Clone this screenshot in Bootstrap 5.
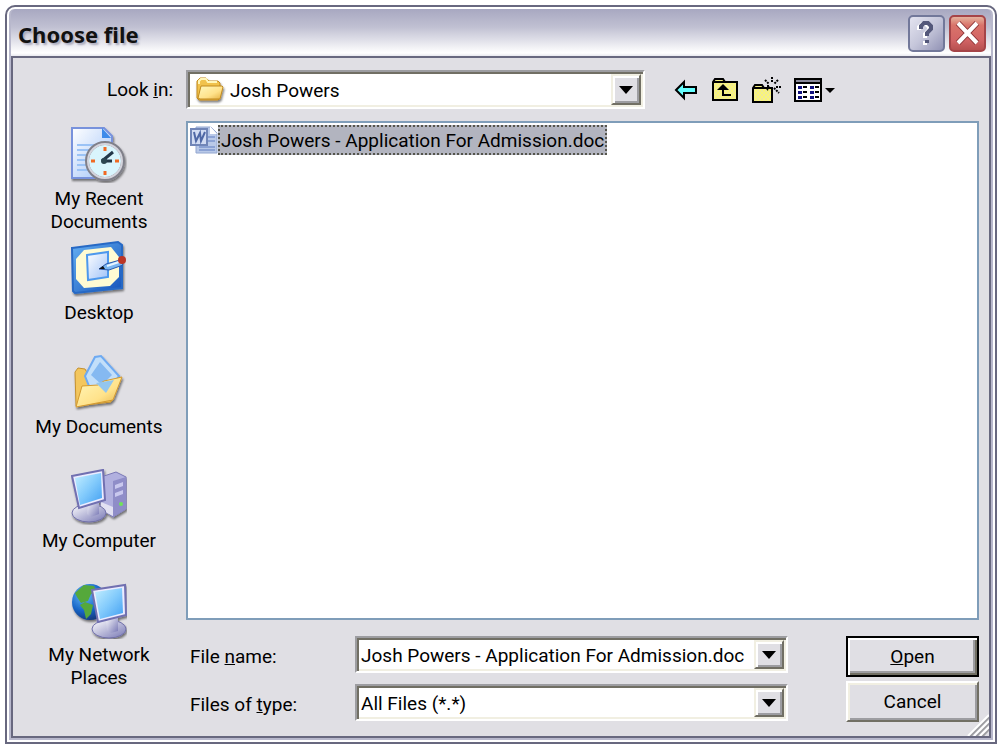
<!DOCTYPE html>
<html lang="en">
<head>
<meta charset="utf-8">
<meta name="viewport" content="width=device-width, initial-scale=1">
<title>Choose file</title>
<link href="https://cdn.jsdelivr.net/npm/bootstrap@5.3.0/dist/css/bootstrap.min.css" rel="stylesheet">
<style>
:root{--face:#e0dfe4;--edge:#68687f;--silver:#b8b8cc;--shade:#9d9da1;--dark:#716f64;--cream:#f1efe2}
body{background:#fff;font-family:Roboto,"Liberation Sans",sans-serif;font-size:19px;line-height:23px;color:#000;padding:5px 7px 2px 5px}
.dialog{background:linear-gradient(#a5a5bf 0,#c0c0d2 20px,#fff 46px,#d3d3df 52px);border:2px solid var(--edge);border-radius:10px 10px 0 0;box-shadow:inset 0 2px #fff,inset 2px 0 #fff,inset -2px 0 #fff,inset 0 -2px #fff,inset 4px 0 var(--silver),inset -4px 0 var(--silver),inset 0 -4px var(--silver)}
.title-bar{height:49px;padding:4px 9px 0 11px}
.title-bar h1{font:bold 22px/26px "Noto Sans","Open Sans",sans-serif;color:#111;text-shadow:2px 2px 2px #aaaabb}
.cap-btn{width:37px;height:37px;padding:0;border:2px solid #72789a;border-radius:5px;background:linear-gradient(135deg,#e4e4f0,#c5c6da 50%,#9293b5)}
.cap-close{border-color:#a54448;background:linear-gradient(#e5b29d 0,#d9736a 25%,#d26465 70%,#b75050)}
.client{margin:0 4px 4px;background:var(--face);border:2px solid var(--edge);padding:12px 10px 14px 12px;position:relative}
.side{width:148px;margin-right:13px}
.places{padding-top:6px}
.side-label{text-align:right}
.place{display:block;min-height:114px;color:#000;text-decoration:none;text-align:center}
.place svg{display:block;margin:0 auto 4px}
.combo{background:#fff;border:2px solid;border-color:var(--shade) #fff #fff var(--shade);box-shadow:inset 2px 2px var(--dark),inset -2px -2px var(--cream);padding:2px}
.combo select,.combo input{appearance:none;border:0;background:none;outline:0;padding:2px 2px 0;min-width:0;color:#000}
.combo.look select{padding-left:4px}
.drop{width:30px;padding:0;border:2px solid;border-color:var(--cream) var(--dark) var(--dark) var(--cream);box-shadow:inset 2px 2px #fff,inset -2px -2px var(--shade);background:var(--face)}
.look{width:459px;height:39px}
.field{height:37px}
.fields{gap:11px}
.field-label{width:169px;padding:3px 0 0 4px}
.tool{border:0;background:none;padding:0}
.files{background:#fff;border:2px solid #7f9db9;min-height:499px;padding:2px}
.file-name{background:#b2b4bf;border:2px dotted #55554c;padding:0 1px;height:30px;line-height:28px}
.push{height:41px;border:2px solid;border-color:#fff var(--dark) var(--dark) #fff;box-shadow:inset 2px 2px var(--cream),inset -2px -2px var(--shade);background:var(--face);padding:0}
.push-default{border-color:#000;box-shadow:inset 2px 2px #fff,inset -2px -2px var(--dark),inset -4px -4px var(--shade)}
.actions{width:133px;margin-left:58px}
.grip{position:absolute;right:0;bottom:0}
</style>
</head>
<body class="min-vh-100">
<svg width="0" height="0" class="position-absolute" aria-hidden="true"><defs>
<linearGradient id="paper" x2="1" y2="1"><stop stop-color="#fff"/><stop offset="1" stop-color="#9fc2f8"/></linearGradient>
<linearGradient id="screen" x2="1" y2="1"><stop stop-color="#c4efff"/><stop offset=".5" stop-color="#83cbfc"/><stop offset="1" stop-color="#429ff2"/></linearGradient>
<linearGradient id="blue" x2="1" y2="1"><stop stop-color="#65b0f2"/><stop offset="1" stop-color="#1553bb"/></linearGradient>
<linearGradient id="gold" x2="1" y2="1"><stop stop-color="#fff8bd"/><stop offset=".6" stop-color="#ffe28a"/><stop offset="1" stop-color="#e4af3e"/></linearGradient>
<linearGradient id="metal" x2="1" y2="1"><stop stop-color="#fff"/><stop offset="1" stop-color="#7676b4"/></linearGradient>
<radialGradient id="sea" cx=".35" cy=".3" r=".75"><stop stop-color="#66bdf8"/><stop offset=".6" stop-color="#1866c8"/><stop offset="1" stop-color="#113477"/></radialGradient>
<pattern id="dither" width="4" height="4" patternUnits="userSpaceOnUse"><path fill="#fbf774" d="M0 0h4v4H0z"/><path fill="#efe99a" d="M0 0h2v2H0zM2 2h2v2H2z"/></pattern>
<filter id="soft" x="-20%" y="-20%" width="150%" height="150%"><feDropShadow dx="1" dy="2" stdDeviation="1" flood-opacity=".5"/></filter>
</defs></svg>

<main class="dialog d-flex flex-column">
  <header class="title-bar d-flex align-items-center">
    <h1 class="m-0 me-auto">Choose file</h1>
    <button class="cap-btn me-1" aria-label="Help"><svg class="d-block" width="33" height="33" viewBox="0 0 33 33" fill="none"><path d="M11 12V9l3-3h4l3 3v3l-4 4v4m0 3v4" transform="translate(-2 1)" stroke="#fff" stroke-width="4"/><path d="M11 12V9l3-3h4l3 3v3l-4 4v3m0 4v3" stroke="#54587a" stroke-width="4"/></svg></button>
    <button class="cap-btn cap-close" aria-label="Close"><svg class="d-block" width="33" height="33" viewBox="0 0 33 33"><path d="M7 6l19 20M26 6L7 26" stroke="#8d3437" stroke-width="6"/><path d="M7 6l19 20M26 6L7 26" stroke="#fff" stroke-width="4"/></svg></button>
  </header>
  <form class="client" onsubmit="return false">
    <div class="d-flex align-items-center">
      <label class="side side-label" for="look">Look <u>i</u>n:</label>
      <div class="combo look d-flex">
        <svg class="align-self-center ms-1" width="32" height="28" viewBox="0 0 32 28" filter="url(#soft)"><path d="M3 22V5l3-3h6l3 3h9l2 2v15l-2 2H5z" fill="#f1c24d" stroke="#c18a20"/><path d="M4 22l3-12h21l1 1-3 12H6z" fill="url(#gold)" stroke="#c18a20"/><path d="M5 8V5l2-2h5l2 3h9" fill="none" stroke="#fff6b9" stroke-width="2"/></svg>
        <select id="look" class="flex-grow-1"><option>Josh Powers</option></select>
        <span class="drop d-flex align-items-center justify-content-center"><svg width="14" height="8"><path d="M0 0h14L7 8z"/></svg></span>
      </div>
      <div class="d-flex align-items-center ms-4 ps-1">
        <button class="tool" aria-label="Back"><svg class="d-block" width="26" height="28" viewBox="0 0 26 28"><path d="M3 14l8-8v5h12v6H11v5z" fill="#6ff" stroke="#000" stroke-width="2"/></svg></button>
        <button class="tool ms-2 ps-1" aria-label="Up one level"><svg class="d-block" width="28" height="28" viewBox="0 0 28 28"><path d="M2 24V6l2-3h8l2 3h12v18z" fill="url(#dither)" stroke="#000" stroke-width="2"/><path d="M3 6h11" stroke="#000" stroke-width="2"/><path d="M20 19h-8v-8" fill="none" stroke="#000" stroke-width="2"/><path d="M6 14l6-6 6 6z"/></svg></button>
        <button class="tool ms-2 ps-1" aria-label="New folder"><svg class="d-block" width="30" height="28" viewBox="0 0 30 28"><path d="M2 26V12l2-3h7l2 3h8v14z" fill="url(#dither)" stroke="#000" stroke-width="2"/><path d="M2 12h12" stroke="#000" stroke-width="2"/><path d="M21 1v6m0 6v4M14 4l4 4m5 4l5 5m-1-13l-4 4m-4 3l-3 3m9-3h5m-14-1h3" stroke="#000" stroke-width="2" stroke-dasharray="2 1"/></svg></button>
        <button class="tool ms-2 ps-1" aria-label="View menu"><svg class="d-block" width="42" height="28" viewBox="0 0 42 28"><path d="M2 3h26v22H2z" fill="#fff" stroke="#000" stroke-width="2"/><path d="M3 4h24v2H3z" fill="#889"/><path d="M2 7h26" stroke="#000" stroke-width="2"/><path d="M5 10h4v3H5zm0 5h4v3H5zm0 5h4v3H5zM17 10h4v3h-4zm0 5h4v3h-4zm0 5h4v3h-4z" fill="#10107f"/><path d="M10 11h4m-4 5h4m-4 5h4m8-10h4m-4 5h4m-4 5h4" stroke="#000" stroke-width="2"/><path d="M32 12h10l-5 5z"/></svg></button>
      </div>
    </div>

    <div class="d-flex mt-2 pt-1">
      <nav class="side places" aria-label="Places">
        <a class="place" href="#"><svg width="56" height="56" viewBox="0 0 56 56"><g filter="url(#soft)"><path d="M1 1h32l8 8v42H1z" fill="url(#paper)" stroke="#7892dc" stroke-width="2"/><path d="M31 1v10h9z" fill="#3c8bea"/><path d="M6 18h24M6 23h20M6 28h16M6 33h14M6 38h14M6 43h16" stroke="#9bc3f6" stroke-width="2"/><circle cx="34" cy="34" r="18" fill="#d9f5fd" stroke="#80808a" stroke-width="4"/><circle cx="34" cy="34" r="17" fill="none" stroke="#d4d4dd" stroke-width="2"/></g><path d="M34 20v4m0 20v4M20 34h4m20 0h4" stroke="#f06a24" stroke-width="3"/><path d="M31 34l11-9M33 34h8" stroke="#233849" stroke-width="3"/><circle cx="33" cy="34" r="3" fill="#2c4651"/></svg>My Recent<br>Documents</a>
        <a class="place" href="#"><svg width="56" height="56" viewBox="0 0 56 56"><g filter="url(#soft)"><path d="M1 7l46-6 4 3v43L4 52l-2-2z" fill="url(#blue)" stroke="#2869c5" stroke-width="2"/><path d="M13 9l27-3 8 10v20l-9 9-26 2-8-9V18z" fill="#fffbd3"/><path d="M16 14l21-3v25l-20 3z" fill="url(#paper)" stroke="#4d98ed" stroke-width="2"/></g><path d="M28 28l7-5 14-4 3 5-14 5z" fill="#79b6f1" stroke="#2859ad"/><path d="M36 25l12-4" stroke="#e6f5ff" stroke-width="2"/><path d="M28 28l4-3 2 3z" fill="#111"/><circle cx="51" cy="19" r="4" fill="#bb3525"/></svg>Desktop</a>
        <a class="place" href="#"><svg width="56" height="56" viewBox="0 0 56 56"><g filter="url(#soft)"><path d="M5 51L4 17l3-4 7 1 4 7 27 4-5 22z" fill="#f3c65d" stroke="#c5912e"/><path d="M14 21L24 2l6-1 18 20-13 18-17-8z" fill="#c2dffa" stroke="#6eaaf2" stroke-width="2"/><path d="M20 20L29 7l12 13-10 10z" fill="#85b9f1"/><path d="M5 52l6-21 16-1 6-4 18-4-9 23z" fill="url(#gold)" stroke="#d49a30"/></g><path d="M25 28l18-3-8 13z" fill="#93c6ee"/></svg>My Documents</a>
        <a class="place" href="#"><svg width="56" height="56" viewBox="0 0 56 56"><g filter="url(#soft)"><path d="M30 8l15-5 10 5v32l-13 8-12-8z" fill="#b1b0df" stroke="#7b79b7"/><path d="M42 12l13-4v32l-13 8z" fill="#8f8dc8"/><path d="M44 16l8-3v4l-8 3zm0 8l8-3v4l-8 3z" fill="#c9c8ee"/><path d="M30 33l12 5v9l-12-6z" fill="#e2e1f2"/><circle cx="50" cy="35" r="2" fill="#71e359"/><ellipse cx="18" cy="44" rx="17" ry="9" fill="url(#metal)" stroke="#7170aa"/><path d="M17 34l11-3v14l-8 3-4-3z" fill="url(#metal)"/><path d="M1 7l31-6 2 30-26 8z" fill="#ececff" stroke="#7170b1" stroke-width="2"/><path d="M4 9l26-5 1 25-22 7z" fill="url(#screen)"/></g></svg>My Computer</a>
        <a class="place" href="#"><svg width="56" height="56" viewBox="0 0 56 56"><g filter="url(#soft)"><circle cx="19" cy="19" r="18" fill="url(#sea)"/><path d="M4 10l9-8 10 1 3 6-6 2-3 7-7 2-4-6zm10 9l8 3-2 9-5 5-2-9-4-5z" fill="#55a83a"/><ellipse cx="38" cy="46" rx="17" ry="9" fill="url(#metal)" stroke="#7170aa"/><path d="M35 35l12-2v15l-7 2-4-3z" fill="url(#metal)"/><path d="M21 7l33-5 1 30-28 7z" fill="#ececff" stroke="#7170b1" stroke-width="2"/><path d="M24 9l27-4 1 25-23 6z" fill="url(#screen)"/></g></svg>My Network<br>Places</a>
      </nav>
      <div class="flex-grow-1">
        <div class="files" role="listbox" aria-label="Files">
          <div class="d-flex" role="option" aria-selected="true">
            <svg width="28" height="30" viewBox="0 0 28 30"><path d="M6 2h15l6 6v20H6z" fill="#b9c9e8" stroke="#92a6d0"/><path d="M20 1l7 8h-7z" fill="#fff"/><path d="M17 12h8m-8 4h8M9 22h16m-16 3h16" stroke="#8ba2d4" stroke-width="2"/><path d="M1 4h16v16H1z" fill="#d2dcf3" stroke="#7186b8" stroke-width="2"/><path d="M4 7l2 9 4-8 1 8 4-9" fill="none" stroke="#4f68a6" stroke-width="2"/></svg>
            <span class="file-name">Josh Powers - Application For Admission.doc</span>
          </div>
        </div>
        <div class="d-flex mt-3">
          <div class="fields flex-grow-1 d-flex flex-column">
            <div class="d-flex align-items-center">
              <label class="field-label" for="fname">File <u>n</u>ame:</label>
              <div class="combo field flex-grow-1 d-flex">
                <input id="fname" class="flex-grow-1" value="Josh Powers - Application For Admission.doc">
                <button class="drop d-flex align-items-center justify-content-center" aria-label="Recent names"><svg width="14" height="8"><path d="M0 0h14L7 8z"/></svg></button>
              </div>
            </div>
            <div class="d-flex align-items-center">
              <label class="field-label" for="ftype">Files of <u>t</u>ype:</label>
              <div class="combo field flex-grow-1 d-flex">
                <select id="ftype" class="flex-grow-1"><option>All Files (*.*)</option></select>
                <span class="drop d-flex align-items-center justify-content-center"><svg width="14" height="8"><path d="M0 0h14L7 8z"/></svg></span>
              </div>
            </div>
          </div>
          <div class="actions d-flex flex-column gap-1">
            <button class="push push-default"><u>O</u>pen</button>
            <button class="push">Cancel</button>
          </div>
        </div>
      </div>
    </div>
    <svg class="grip" width="22" height="22"><path d="M3 22L22 3M9 22L22 9M15 22l7-7" stroke="#9d9da1" stroke-width="3"/><path d="M1 22L22 1M7 22L22 7M13 22l9-9" stroke="#fff" stroke-width="2"/></svg>
  </form>
</main>
<script src="https://cdn.jsdelivr.net/npm/bootstrap@5.3.0/dist/js/bootstrap.bundle.min.js"></script>
</body>
</html>
